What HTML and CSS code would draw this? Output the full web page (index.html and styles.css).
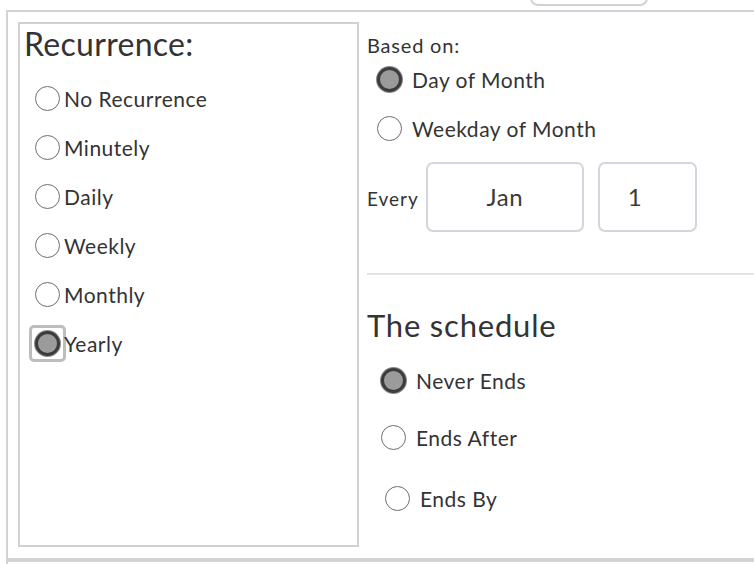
FILE: index.html
```html
<!DOCTYPE html>
<html>
<head>
<meta charset="utf-8">
<link rel="stylesheet" href="styles.css">
</head>
<body>
<div class="topbar"><div class="topbtn"></div></div>
<div class="frame">
  <div class="panel">
    <div class="recur">
      <div class="title">Recurrence:</div>
      <label class="opt"><input type="radio" name="rec" class="radio"><span>No Recurrence</span></label>
      <label class="opt"><input type="radio" name="rec" class="radio"><span>Minutely</span></label>
      <label class="opt"><input type="radio" name="rec" class="radio"><span>Daily</span></label>
      <label class="opt"><input type="radio" name="rec" class="radio"><span>Weekly</span></label>
      <label class="opt"><input type="radio" name="rec" class="radio"><span>Monthly</span></label>
      <label class="opt"><span class="focus-ring"><input type="radio" name="rec" class="radio" checked></span><span>Yearly</span></label>
    </div>
    <div class="detail">
      <div class="based">Based on:</div>
      <label class="opt opt-based"><input type="radio" name="based" class="radio" checked><span>Day of Month</span></label>
      <label class="opt opt-based"><input type="radio" name="based" class="radio"><span>Weekday of Month</span></label>
      <div class="every">
        <span class="every-label">Every</span>
        <div class="field field-month">Jan</div>
        <div class="field field-day">1</div>
      </div>
      <div class="divider"></div>
      <div class="sched-title">The schedule</div>
      <label class="opt opt-end opt-never"><input type="radio" name="end" class="radio" checked><span>Never Ends</span></label>
      <label class="opt opt-end opt-after"><input type="radio" name="end" class="radio"><span>Ends After</span></label>
      <label class="opt opt-end opt-by"><input type="radio" name="end" class="radio"><span>Ends By</span></label>
    </div>
  </div>
  <div class="footer"></div>
</div>
</body>
</html>
```

FILE: styles.css
```css
html, body {
  margin: 0;
  padding: 0;
  background: #ffffff;
}
body {
  width: 754px;
  height: 564px;
  overflow: hidden;
  font-family: "Lato", "Open Sans", sans-serif;
  color: #333333;
}
.topbar {
  height: 6px;
  overflow: hidden;
  display: flex;
  align-items: flex-end;
  padding-left: 530px;
}
.topbtn {
  flex: none;
  width: 118px;
  height: 30px;
  box-sizing: border-box;
  border: 2px solid #cdd2d8;
  border-radius: 8px;
}
.frame {
  margin-top: 4px;
  margin-left: 6px;
  width: 800px;
  border-left: 2px solid #d3d3d3;
  border-top: 2px solid #d3d3d3;
}
.panel {
  display: flex;
  gap: 8px;
  padding: 10px 0 11px 10px;
}
.recur {
  flex: none;
  width: 341px;
  height: 525px;
  box-sizing: border-box;
  border: 2px solid #d1d1d1;
  padding-left: 4px;
}
.title {
  font-size: 32px;
  line-height: 38px;
  margin-top: 1px;
  margin-bottom: 11px;
  letter-spacing: 0.3px;
}
.opt {
  display: flex;
  align-items: center;
  height: 49px;
  font-size: 21px;
  line-height: 24px;
  gap: 4px;
  padding-left: 11px;
  letter-spacing: 0.5px;
}
.radio {
  appearance: none;
  -webkit-appearance: none;
  margin: 0;
  flex: none;
  width: 25px;
  height: 25px;
  box-sizing: border-box;
  border-radius: 50%;
  border: 1.5px solid #6e6e6e;
  background: #ffffff;
}
.radio:checked {
  border: 3px solid #3c3c3c;
  background: #9b9b9b;
  box-shadow: 0 0 0 1px #8a8a8a;
}
.focus-ring {
  display: flex;
  flex: none;
  margin: -6px;
  padding: 3px;
  border: 3px solid #bdbdbd;
  border-radius: 5px;
}
.detail {
  flex: 1;
  display: flex;
  flex-direction: column;
}
.based {
  font-size: 20px;
  line-height: 20px;
  margin-top: 13px;
  letter-spacing: 0.8px;
}
.opt-based {
  padding-left: 10px;
  gap: 10px;
}
.every {
  display: flex;
  align-items: baseline;
  margin-top: 9px;
  gap: 7px;
}
.every-label {
  font-size: 19px;
  letter-spacing: 1px;
}
.field {
  height: 70px;
  box-sizing: border-box;
  border: 2px solid #d3d7dd;
  border-radius: 7px;
  font-size: 24px;
  line-height: 66px;
  color: #3a3a3a;
  letter-spacing: 0.5px;
}
.field-month {
  width: 158px;
  text-align: center;
}
.field-day {
  width: 99px;
  margin-left: 7px;
  padding-left: 28px;
  box-sizing: border-box;
}
.divider {
  height: 2px;
  background: #e4e4e4;
  margin-top: 41px;
}
.sched-title {
  font-size: 31px;
  line-height: 36px;
  margin-top: 32px;
  letter-spacing: 0.8px;
}
.opt-end {
  padding-left: 14px;
  gap: 10px;
}
.opt-never {
  margin-top: 13px;
}
.opt-after {
  margin-top: 8px;
}
.opt-by {
  margin-top: 12px;
  padding-left: 18px;
}
.footer {
  border-top: 4px solid #d3d3d3;
  height: 10px;
}
```
